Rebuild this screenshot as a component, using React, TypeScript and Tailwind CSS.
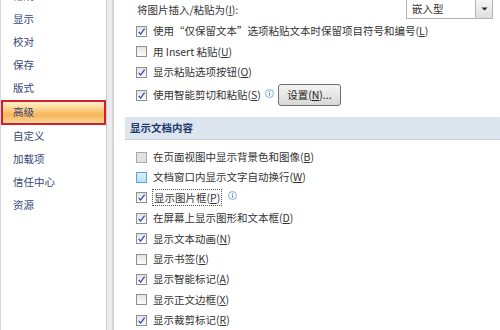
import React from 'react';

type Row = { text: string; key: string; tail?: string; checked?: boolean; tone?: 'gray' | 'hover'; focus?: boolean; info?: boolean };

const menu = ['常规', '显示', '校对', '保存', '版式', '高级', '自定义', '加载项', '信任中心', '资源'];

const docRows: Row[] = [
  { text: '在页面视图中显示背景色和图像', key: 'B', tone: 'gray' },
  { text: '文档窗口内显示文字自动换行', key: 'W', tone: 'hover' },
  { text: '显示图片框', key: 'P', checked: true, focus: true, info: true },
  { text: '在屏幕上显示图形和文本框', key: 'D', checked: true },
  { text: '显示文本动画', key: 'N', checked: true },
  { text: '显示书签', key: 'K' },
  { text: '显示智能标记', key: 'A', checked: true },
  { text: '显示正文边框', key: 'X' },
  { text: '显示裁剪标记', key: 'R', checked: true },
];

function CheckBox({ checked, tone }: { checked?: boolean; tone?: 'gray' | 'hover' }) {
  const box =
    tone === 'hover'
      ? 'border-[#5ea3d6] bg-[linear-gradient(to_bottom,#d8effc,#b9e0f7)]'
      : tone === 'gray'
        ? 'border-[#a9a9a9] bg-[#e2e2e2]'
        : 'border-[#8f8f8f] bg-[linear-gradient(to_bottom,#e4e4e4,#fbfbfb)]';
  return (
    <span className={`relative flex h-[11px] w-[11px] shrink-0 items-center justify-center border ${box}`}>
      {checked && (
        <svg width="9" height="9" viewBox="0 0 9 9">
          <path d="M1.6 4.8 L3.6 7 L7.6 1.6" fill="none" stroke="#2a46b0" strokeWidth="1.2" />
        </svg>
      )}
    </span>
  );
}

function Info() {
  return (
    <svg width="9" height="9" viewBox="0 0 9 9" className="shrink-0 -mt-[4px]">
      <circle cx="4.5" cy="4.5" r="4" fill="#f4f8fd" stroke="#7ea7dc" strokeWidth="0.9" />
      <rect x="4.05" y="3.7" width="0.9" height="3" fill="#4d7fc9" />
      <rect x="4.05" y="2" width="0.9" height="0.9" fill="#4d7fc9" />
    </svg>
  );
}

function Label({ text, k, tail = '' }: { text: string; k: string; tail?: string }) {
  return (
    <span className="whitespace-nowrap">
      {text}(<span className="underline">{k}</span>){tail}
    </span>
  );
}

export default function App() {
  return (
    <div className="flex h-[330px] w-[500px] overflow-hidden bg-white font-['Noto_Sans_CJK_SC',sans-serif] text-[10.5px] leading-none">
      <nav className="w-[107px] shrink-0 border-l border-r border-l-[#d9d9de] border-r-[#c9c9ce] text-[#34457a]">
        <div className="-mt-[15px]">
          {menu.map((m) =>
            m === '高级' ? (
              <div
                key={m}
                className="flex h-[25px] items-center border-2 border-[#d3202c] bg-[linear-gradient(to_bottom,#fef1cc,#fbd088_35%,#f7b558_62%,#fbd699)] pl-[10px]"
              >
                {m}
              </div>
            ) : (
              <div key={m} className="flex h-[23px] items-center pl-[12px]">
                {m}
              </div>
            ),
          )}
        </div>
      </nav>
      <div className="w-[5px] shrink-0 bg-[#ececef]" />
      <main className="flex-1 border-l-2 border-[#d5d6da] text-[#333]">
        <div className="flex h-[21px] items-center pl-[23px]">
          <span className="whitespace-nowrap">
            将图片插入/粘贴为(<span className="underline">I</span>):
          </span>
          <div className="ml-auto mr-[7px] -mt-[3px] flex h-[20px] w-[87px] border border-[#aeb4bc] bg-white">
            <span className="flex flex-1 items-center pl-[5px]">嵌入型</span>
            <span className="flex w-[17px] items-center justify-center border-l border-[#b5b5b5] bg-[linear-gradient(to_bottom,#f6f6f6,#dedede)]">
              <svg width="7" height="4" viewBox="0 0 7 4">
                <path d="M0.5 0.5 H6.5 L3.5 3.5 Z" fill="#222" />
              </svg>
            </span>
          </div>
        </div>
        <div className="flex h-[20.5px] items-center gap-[6px] pl-[22px]">
          <CheckBox checked />
          <Label text="使用“仅保留文本”选项粘贴文本时保留项目符号和编号" k="L" />
        </div>
        <div className="flex h-[20.5px] items-center gap-[6px] pl-[22px]">
          <CheckBox />
          <Label text="用 Insert 粘贴" k="U" />
        </div>
        <div className="flex h-[20.5px] items-center gap-[6px] pl-[22px]">
          <CheckBox checked />
          <Label text="显示粘贴选项按钮" k="O" />
        </div>
        <div className="flex h-[25px] items-center gap-[6px] pl-[22px]">
          <CheckBox checked />
          <Label text="使用智能剪切和粘贴" k="S" />
          <span className="-ml-[2px] flex">
            <Info />
          </span>
          <button className="-ml-[2px] flex h-[22px] w-[63px] items-center justify-center rounded-[3px] border border-[#707070] bg-[linear-gradient(to_bottom,#f3f3f3,#e6e6e6_50%,#d8d8d8)] text-[#222]">
            <Label text="设置" k="N" tail="..." />
          </button>
        </div>
        <div className="ml-[11px] mt-[9.5px] flex h-[23px] items-center border-b border-[#c6d2df] bg-[#dde5ee] pl-[5px] font-bold text-[#1f3a6c]">
          显示文档内容
        </div>
        <div className="pt-[7px]">
          {docRows.map((r) => (
            <div key={r.key} className="flex h-[20.4px] items-center gap-[6px] pl-[22px]">
              <CheckBox checked={r.checked} tone={r.tone} />
              {r.focus ? (
                <span className="-ml-[1px] flex h-[17px] items-center border border-dotted border-[#555] px-[1px]">
                  <Label text={r.text} k={r.key} />
                </span>
              ) : (
                <Label text={r.text} k={r.key} />
              )}
              {r.info && <Info />}
            </div>
          ))}
        </div>
      </main>
    </div>
  );
}
